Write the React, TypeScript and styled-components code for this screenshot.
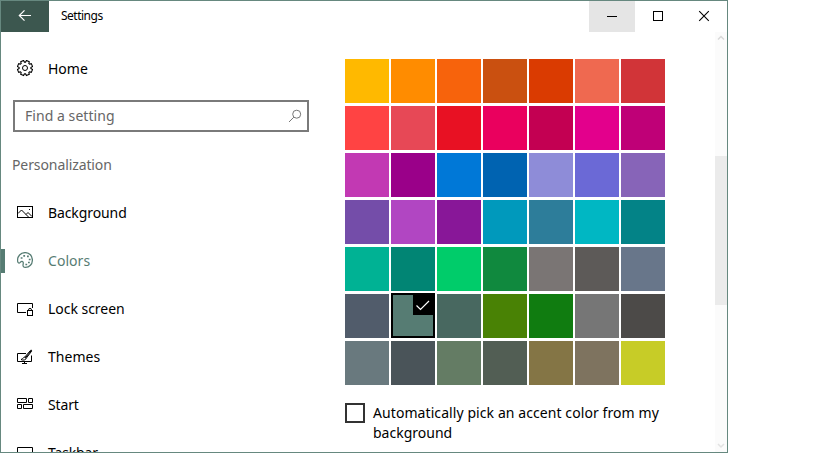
import React from "react";
import styled, { createGlobalStyle } from "styled-components";

const accent = "#567c73";

const Global = createGlobalStyle`
  * { box-sizing: border-box; }
  body { margin: 0; background: #fff; font-family: "Noto Sans", "Open Sans", sans-serif; color: #000; overflow: hidden; }
`;

const Window = styled.div`
  width: 728px;
  height: 453px;
  border: 1px solid #66887f;
  display: flex;
  flex-direction: column;
  overflow: hidden;
  background: #fff;
`;
const TitleBar = styled.header`
  flex: 0 0 31px;
  display: flex;
`;
const BackButton = styled.div`
  width: 48px;
  background: #3c574f;
  svg { display: block; }
`;
const Title = styled.div`
  flex: 1;
  padding-left: 12px;
  font-size: 12px;
  line-height: 30px;
  letter-spacing: -0.5px;
`;
const CaptionButton = styled.div<{ $hover?: boolean }>`
  width: 46px;
  background: ${(p) => (p.$hover ? "#e5e5e5" : "transparent")};
  svg { display: block; }
`;
const Body = styled.div`
  flex: 1;
  min-height: 0;
  display: flex;
`;
const Sidebar = styled.nav`
  width: 344px;
  padding-top: 13px;
  overflow: hidden;
`;
const NavItem = styled.div<{ $active?: boolean }>`
  height: 48px;
  display: flex;
  align-items: center;
  color: ${(p) => (p.$active ? accent : "#000")};
  &::before {
    content: "";
    width: 4px;
    height: 24px;
    margin-right: 12px;
    background: ${(p) => (p.$active ? accent : "transparent")};
  }
  svg { display: block; margin-right: 15px; }
`;
const Label = styled.span<{ $spacing?: number }>`
  font-size: 14px;
  line-height: 20px;
  letter-spacing: ${(p) => p.$spacing ?? -0.15}px;
  white-space: nowrap;
`;
const SearchBox = styled.div`
  width: 296px;
  height: 32px;
  margin: 7px 0 9px 12px;
  border: 2px solid #7a7a7a;
  padding: 0 5px 0 10px;
  display: flex;
  align-items: center;
  justify-content: space-between;
  color: #666;
`;
const GroupHeading = styled.div`
  height: 48px;
  padding-left: 11px;
  display: flex;
  align-items: center;
  color: #666;
`;
const Content = styled.main`
  flex: 1;
  padding-top: 27px;
`;
const Palette = styled.div`
  display: grid;
  grid-template-columns: repeat(7, 44px);
  grid-auto-rows: 44px;
  gap: 3px 2px;
`;
const Swatch = styled.div<{ $color: string; $selected?: boolean }>`
  background: ${(p) => p.$color};
  border: ${(p) => (p.$selected ? "2px solid #000" : "none")};
  margin-top: ${(p) => (p.$selected ? "-1px" : "0")};
  display: flex;
  justify-content: flex-end;
`;
const CheckBadge = styled.div`
  width: 20px;
  height: 20px;
  background: #000;
  svg { display: block; }
`;
const Option = styled.div`
  display: flex;
  margin-top: 18px;
`;
const CheckBox = styled.div`
  width: 20px;
  height: 20px;
  border: 2px solid #333;
  margin-right: 8px;
`;
const OptionText = styled.div`
  display: flex;
  flex-direction: column;
`;
const ScrollBar = styled.div`
  width: 12px;
  background: #fbfbfb;
  display: flex;
  flex-direction: column;
  svg { display: block; }
`;
const ScrollThumb = styled.div`
  height: 149px;
  margin: 107px 0 auto;
  background: #ebebeb;
`;

const Icon = ({ children, top = 0 }: { children: React.ReactNode; top?: number }) => (
  <svg width="16" height="18" viewBox={`0 ${top - 1} 16 18`} fill="none" stroke="currentColor" strokeWidth="1">
    {children}
  </svg>
);

const gearPoints = () => {
  const pts: string[] = [];
  for (let i = 0; i < 8; i++) {
    const base = (i * Math.PI) / 4 + Math.PI / 8;
    [[-0.3, 5.9], [-0.21, 7.7], [0.21, 7.7], [0.3, 5.9]].forEach(([a, r]) =>
      pts.push(`${(8 + r * Math.sin(base + a)).toFixed(2)},${(8 - r * Math.cos(base + a)).toFixed(2)}`)
    );
  }
  return pts.join(" ");
};

const GearIcon = () => (
  <Icon top={1}>
    <polygon points={gearPoints()} strokeWidth="1.1" strokeLinejoin="round" />
    <circle cx="8" cy="8" r="2.5" />
  </Icon>
);
const PictureIcon = () => (
  <Icon>
    <rect x="0.5" y="1.5" width="15" height="11" />
    <path d="M1 8.500 4.500 5l7.500 7.500M9 9.500l2-2 4 4" />
    <path d="M12 4.500h1" />
  </Icon>
);
const PaletteIcon = () => (
  <Icon top={1}>
    <path strokeWidth="1.250" d="M.6 9C.2 4.200 3.700.6 8.200.6c4.200 0 7.200 3.200 7.200 7.300 0 4.300-3 7.500-6.900 7.500-2 0-2.800-1.300-2.400-2.900.4-1.700.2-3-1-3.200C3.400 9 3 11.600 1.700 11 .9 10.600.7 9.900.6 9Z" />
    <path d="M3.700 6h1.800M6.300 3.800h1.800M10 4.400h1.800M11.800 7.500h1.800M11 10.500h1.800M8.400 12.500h1.800" strokeWidth="1.700" />
  </Icon>
);
const LockScreenIcon = () => (
  <Icon>
    <path d="M9 11.500H.5v-9h15V7" />
    <rect x="10.500" y="9.500" width="5" height="5" />
    <path d="M11.500 9.500V8.900a1.500 1.500 0 0 1 3 0v.6" />
  </Icon>
);
const ThemesIcon = () => (
  <Icon>
    <path d="M9 4.500H.5v8h14V6.500M5 14.500h5M7.500 13v1.500" />
    <path d="M7.700 8.200 13.600 1.300q1.200-.7 1.100.8L9.200 9.300ZM7.700 8.200C6 8 6.500 10 4 10.500c2 1.200 5 .5 5.200-1.200" />
    <path d="M8.500 8.700 14 1.900" />
  </Icon>
);
const StartIcon = () => (
  <Icon>
    <path d="M.5 1.500h9v4h-9ZM11.500 1.500h4v4h-4ZM.5 7.500h4v4h-4ZM6.500 7.500h9v4h-9Z" />
  </Icon>
);
const TaskbarIcon = () => (
  <Icon>
    <path d="M.5 2.500h15v11H.5Z" />
  </Icon>
);

const navItems = [
  { label: "Background", icon: <PictureIcon />, spacing: -0.1 },
  { label: "Colors", icon: <PaletteIcon />, active: true, spacing: 0.05 },
  { label: "Lock screen", icon: <LockScreenIcon />, spacing: -0.03 },
  { label: "Themes", icon: <ThemesIcon />, spacing: 0.02 },
  { label: "Start", icon: <StartIcon /> },
  { label: "Taskbar", icon: <TaskbarIcon /> },
];

const colors = [
  "#ffb900", "#ff8c00", "#f7630c", "#ca5010", "#da3b01", "#ef6950", "#d13438",
  "#ff4343", "#e74856", "#e81123", "#ea005e", "#c30052", "#e3008c", "#bf0077",
  "#c239b3", "#9a0089", "#0078d7", "#0063b1", "#8e8cd8", "#6b69d6", "#8764b8",
  "#744da9", "#b146c2", "#881798", "#0099bc", "#2d7d9a", "#00b7c3", "#038387",
  "#00b294", "#018574", "#00cc6a", "#10893e", "#7a7574", "#5d5a58", "#68768a",
  "#515c6b", "#567c73", "#486860", "#498205", "#107c10", "#767676", "#4c4a48",
  "#69797e", "#4a5459", "#647c64", "#525e54", "#847545", "#7e735f", "#c7cc27",
];

export default function App() {
  return (
    <>
      <Global />
      <Window>
        <TitleBar>
          <BackButton>
            <svg width="48" height="31" fill="none" stroke="#fff" strokeWidth="1.200">
              <path d="M30 14.500H18.500M23.500 9.300l-5.200 5.200 5.200 5.200" />
            </svg>
          </BackButton>
          <Title>Settings</Title>
          <CaptionButton $hover>
            <svg width="46" height="31" stroke="#000"><path d="M18 15.500h10" /></svg>
          </CaptionButton>
          <CaptionButton>
            <svg width="46" height="31" fill="none" stroke="#000"><rect x="18.500" y="10.500" width="9" height="9" /></svg>
          </CaptionButton>
          <CaptionButton>
            <svg width="46" height="31" stroke="#000" strokeWidth="1.100"><path d="m18.200 10.200 9.600 9.600m0-9.600-9.600 9.600" /></svg>
          </CaptionButton>
        </TitleBar>
        <Body>
          <Sidebar>
            <NavItem><GearIcon /><Label $spacing={0}>Home</Label></NavItem>
            <SearchBox>
              <Label $spacing={0.05}>Find a setting</Label>
              <svg width="14" height="14" fill="none" stroke="#777">
                <circle cx="8.700" cy="5.200" r="4" />
                <path d="M5.800 8.200 1 13" />
              </svg>
            </SearchBox>
            <GroupHeading><Label $spacing={-0.1}>Personalization</Label></GroupHeading>
            {navItems.map((n) => (
              <NavItem key={n.label} $active={n.active}>
                {n.icon}
                <Label $spacing={n.spacing}>{n.label}</Label>
              </NavItem>
            ))}
          </Sidebar>
          <Content>
            <Palette>
              {colors.map((c) => (
                <Swatch key={c} $color={c} $selected={c === accent}>
                  {c === accent && (
                    <CheckBadge>
                      <svg width="20" height="20" fill="none" stroke="#fff" strokeWidth="1.200">
                        <path d="m3.500 10.500 4 4L16 6" />
                      </svg>
                    </CheckBadge>
                  )}
                </Swatch>
              ))}
            </Palette>
            <Option>
              <CheckBox />
              <OptionText>
                <Label $spacing={0.08}>Automatically pick an accent color from my</Label>
                <Label $spacing={0}>background</Label>
              </OptionText>
            </Option>
          </Content>
          <ScrollBar>
            <svg width="12" height="17" fill="none" stroke="#d8d8d8" strokeWidth="1.500"><path d="m3 7.500 3-3 3 3" /></svg>
            <ScrollThumb />
            <svg width="12" height="12" fill="none" stroke="#e2e2e2" strokeWidth="1.500"><path d="m3 4 3 3 3-3" /></svg>
          </ScrollBar>
        </Body>
      </Window>
    </>
  );
}
